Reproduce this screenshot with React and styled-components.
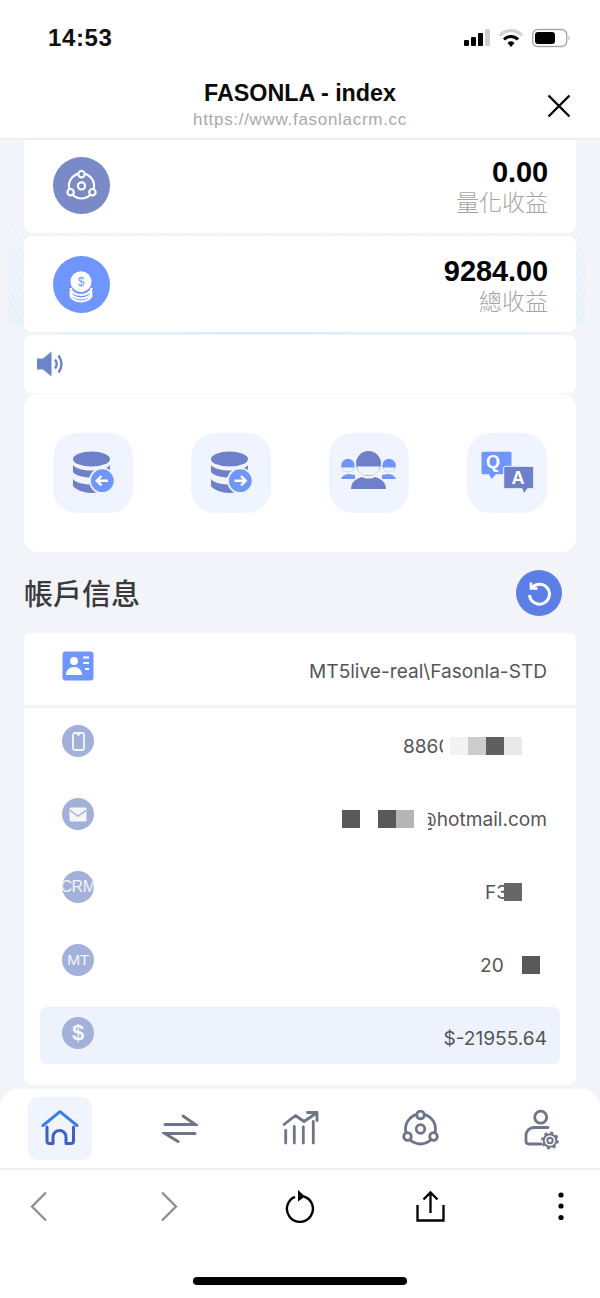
import React from "react";
import styled, { createGlobalStyle } from "styled-components";

const GlobalStyle = createGlobalStyle`
  html, body {
    margin: 0;
    padding: 0;
    background: #fff;
  }
  * {
    box-sizing: border-box;
  }
`;

const UI_FONT = `Inter, "Noto Sans", "Noto Sans CJK TC", sans-serif`;
const CJK_FONT = `"Noto Sans CJK TC", "Noto Sans", sans-serif`;

const Page = styled.div`
  width: 600px;
  height: 1298px;
  display: flex;
  flex-direction: column;
  overflow: hidden;
  font-family: ${UI_FONT};
  background: #f2f4f9;
`;

const StatusBar = styled.div`
  height: 70px;
  padding: 24px 29px 0 48px;
  display: flex;
  justify-content: space-between;
  align-items: flex-start;
  background: #fff;
`;

const Clock = styled.div`
  font: 600 24px/28px "Liberation Sans", sans-serif;
  letter-spacing: 0.6px;
  color: #111;
`;

const StatusIcons = styled.svg`
  margin-top: 3px;
`;

const NavBar = styled.div`
  height: 70px;
  position: relative;
  display: flex;
  flex-direction: column;
  align-items: center;
  background: #fff;
  border-bottom: 2px solid #eceef2;
`;

const NavTitle = styled.div`
  margin-top: 9px;
  font: 700 23.3px/28px "Liberation Sans", sans-serif;
  color: #0a0a0a;
`;

const NavUrl = styled.div`
  margin-top: 2px;
  font: 400 17px/22px "Liberation Sans", sans-serif;
  letter-spacing: 0.7px;
  color: #a9a9a9;
`;

const CloseButton = styled.div`
  position: absolute;
  right: 29px;
  top: 24px;
  width: 24px;
  height: 24px;
`;

const Hero = styled.div`
  position: relative;
  padding: 0 24px;
  display: flex;
  flex-direction: column;
  gap: 3px;

  &::before {
    content: "";
    position: absolute;
    left: 8px;
    right: 15px;
    top: 50px;
    height: 135px;
    background:
      repeating-linear-gradient(60deg, rgba(255, 255, 255, 0.3) 0 2px, transparent 2px 5px),
      linear-gradient(180deg, #f2f4f9 0%, #ecf2f9 55%, #e5f0f9 100%);
  }

  &::after {
    content: "";
    position: absolute;
    left: 60px;
    right: 40px;
    top: 191px;
    height: 3px;
    background: linear-gradient(90deg, #e6eff8, #dcebf6 40%, #e9f0f8);
  }
`;

const StatCard = styled.div`
  position: relative;
  z-index: 1;
  height: ${(p) => p.$height}px;
  padding: 0 28px ${(p) => (p.$flush ? 3 : 0)}px 29px;
  display: flex;
  align-items: center;
  justify-content: space-between;
  background: #fff;
  border-radius: 0 0 8px 8px;
  border-top-left-radius: ${(p) => (p.$flush ? 0 : 8)}px;
  border-top-right-radius: ${(p) => (p.$flush ? 0 : 8)}px;
`;

const StatBadge = styled.div`
  width: 57px;
  height: 57px;
  border-radius: 50%;
  background: ${(p) => p.$color};
  display: flex;
  align-items: center;
  justify-content: center;
`;

const StatText = styled.div`
  padding-top: 2px;
  display: flex;
  flex-direction: column;
  align-items: flex-end;
`;

const StatValue = styled.div`
  font: 700 29px/30px "Liberation Sans", sans-serif;
  letter-spacing: -0.1px;
  color: #050505;
`;

const StatLabel = styled.div`
  font: 300 23px/28px ${CJK_FONT};
  color: #a4a4a4;
`;

const Notice = styled.div`
  position: relative;
  z-index: 1;
  height: 58px;
  padding: 0 12px;
  display: flex;
  align-items: center;
  background: #fff;
  border-radius: 8px;
`;

const Content = styled.div`
  padding: 1px 24px 0;
  display: flex;
  flex-direction: column;
`;

const ActionCard = styled.div`
  height: 158px;
  padding: 39px 29px 0;
  display: flex;
  justify-content: space-between;
  align-items: flex-start;
  background: #fff;
  border-radius: 14px;
`;

const ActionTile = styled.div`
  width: 80px;
  height: 80px;
  border-radius: 24px;
  background: #eff4fe;
`;

const SectionHead = styled.div`
  height: 81px;
  padding: 0 14px 0 0;
  display: flex;
  align-items: center;
  justify-content: space-between;
`;

const SectionTitle = styled.h2`
  margin: 0 0 1px;
  font: 500 29px/40px ${CJK_FONT};
  color: #3a3a3a;
`;

const RefreshButton = styled.div`
  width: 46px;
  height: 46px;
  border-radius: 50%;
  background: #5b7fe6;
  display: flex;
  align-items: center;
  justify-content: center;
`;

const InfoCard = styled.div`
  height: 452px;
  background: #fff;
  border-radius: 8px;
  display: flex;
  flex-direction: column;
`;

const AccountRow = styled.div`
  height: 75px;
  padding: 18px 29px 0 38px;
  display: flex;
  justify-content: space-between;
  align-items: flex-start;
  border-bottom: 3px solid #f2f4f9;
`;

const InfoList = styled.div`
  padding: 7px 16px 0;
  display: flex;
  flex-direction: column;
  gap: 16px;
`;

const InfoRow = styled.div`
  height: 57px;
  padding: 10px ${(p) => p.$inset}px 0 22px;
  display: flex;
  justify-content: space-between;
  align-items: flex-start;
  border-radius: 6px;
  background: ${(p) => (p.$active ? "#edf2fd" : "transparent")};
`;

const RoundIcon = styled.div`
  width: 32px;
  height: 32px;
  flex: none;
  border-radius: 50%;
  background: #a2b0da;
  color: #f4f6fc;
  display: flex;
  align-items: center;
  justify-content: center;
  overflow: hidden;
  white-space: nowrap;
  font: ${(p) => p.$weight || 400} ${(p) => p.$size || 15.5}px/32px "Liberation Sans", sans-serif;
  letter-spacing: -0.4px;
`;

const Value = styled.div`
  display: flex;
  align-items: center;
  height: 30px;
  margin-top: ${(p) => p.$top ?? 6}px;
  font: 400 19.1px/30px ${UI_FONT};
  color: #555;
`;

const ClippedText = styled.span`
  display: flex;
  justify-content: ${(p) => (p.$fromEnd ? "flex-end" : "flex-start")};
  width: ${(p) => p.$width}px;
  margin-left: ${(p) => p.$gap || 0}px;
  overflow: hidden;
  white-space: nowrap;
`;

const Mosaic = styled.div`
  display: flex;
  margin-left: ${(p) => p.$gap}px;
`;

const MosaicCell = styled.div`
  width: 18px;
  height: 18px;
  background: ${(p) => p.$tone};
`;

const Spacer = styled.div`
  flex: 1;
`;

const TabBar = styled.div`
  height: 81px;
  padding-top: 8px;
  display: grid;
  grid-template-columns: repeat(5, 1fr);
  align-items: start;
  justify-items: center;
  background: #fff;
  border-radius: 18px 18px 0 0;
  border-bottom: 2px solid #eceef0;
`;

const TabItem = styled.div`
  width: 64px;
  height: 63px;
  border-radius: 10px;
  background: ${(p) => (p.$active ? "#f0f4fc" : "transparent")};
  display: flex;
  align-items: center;
  justify-content: center;
`;

const BrowserBar = styled.div`
  height: 128px;
  padding: 19px 24px 0 23px;
  display: flex;
  flex-direction: column;
  background: #fff;
`;

const BrowserButtons = styled.div`
  display: flex;
  justify-content: space-between;
  align-items: center;
  height: 34px;
`;

const BrowserButton = styled.div`
  width: 30px;
  height: 34px;
`;

const HomeIndicator = styled.div`
  width: 214px;
  height: 8px;
  margin: 54px auto 0;
  position: relative;
  left: 0.5px;
  border-radius: 4px;
  background: #000;
`;

const NetworkGlyph = ({ color, bg, width = 2, size = 37 }) => (
  <svg width={size} height={size} viewBox="0 0 37 37" fill={bg} stroke={color} strokeWidth={width}>
    <circle cx="18.500" cy="19" r="15" fill="none" />
    <circle cx="18.500" cy="5" r="3.800" />
    <circle cx="5.500" cy="26.500" r="3.800" />
    <circle cx="31.500" cy="26.500" r="3.800" />
    <circle cx="18.500" cy="19" r="4.300" />
  </svg>
);

const CoinsGlyph = () => (
  <svg width="57" height="57" viewBox="0 0 57 57" fill="none">
    <path d="M17.500 32a10.500 7 0 0 0 21 0M17.500 35.500a10.500 7 0 0 0 21 0M17.500 38.500a10.500 7 0 0 0 21 0" stroke="#fff" strokeWidth="2.200" />
    <circle cx="28" cy="25.700" r="10.500" fill="#fff" />
    <text x="28" y="30" textAnchor="middle" fontSize="12" fontFamily="Liberation Sans, sans-serif" fill="#6f96ff">$</text>
  </svg>
);

const Speaker = () => (
  <svg width="30" height="26" viewBox="0 0 30 26">
    <path d="M1 7.500h6L15.500 0.500V25.500L7 18.500H1z" fill="#6b85c9" />
    <path d="M19 8.500q3.500 4.500 0 9M22.500 4.500q6 8.500 0 17" fill="none" stroke="#6b85c9" strokeWidth="2.400" />
  </svg>
);

const Database = ({ dir }) => (
  <svg width="80" height="80" viewBox="0 0 80 80">
    <ellipse cx="38.500" cy="26" rx="18.500" ry="7.500" fill="#6e80c9" />
    <path d="M20 32c3 4 11 5.500 18.500 5.500S54 36 57 32v7c-3 4-11 5.500-18.500 5.500S23 43 20 39z" fill="#6e80c9" />
    <path d="M20 46c3 4 11 5.500 18.500 5.500S54 50 57 46v7c-3 4-11 7-18.500 7S23 57 20 53z" fill="#6e80c9" />
    <circle cx="49.300" cy="47.700" r="12.300" fill="#6f96ff" stroke="#eff4fe" strokeWidth="1.800" />
    {dir === "left" ? (
      <path d="M55 47.700H44M48.500 43l-4.700 4.700 4.700 4.700" fill="none" stroke="#fff" strokeWidth="2.400" />
    ) : (
      <path d="M43.500 47.700H54.500M50 43l4.700 4.700-4.700 4.700" fill="none" stroke="#fff" strokeWidth="2.400" />
    )}
  </svg>
);

const People = () => (
  <svg width="80" height="80" viewBox="0 0 80 80">
    <circle cx="19" cy="32.500" r="6.800" fill="#6f96ff" />
    <circle cx="60" cy="32.500" r="6.800" fill="#6f96ff" />
    <path d="M13 34.500h12c-.5 3-3 4.500-6 4.500s-5.500-1.500-6-4.500zM54 34.500h12c-.5 3-3 4.500-6 4.500s-5.500-1.500-6-4.500z" fill="#eff4fe" />
    <path d="M12 46q1-4 7-5l7 1v4zM67 46q-1-4-7-5l-7 1v4z" fill="#6f96ff" />
    <circle cx="39.500" cy="30.500" r="14" fill="#eff4fe" />
    <circle cx="39.500" cy="30.500" r="12.500" fill="#6e80c9" />
    <path d="M28 33.500h23c-1 6-5.500 9-11.500 9S29 39.500 28 33.500z" fill="#eff4fe" />
    <path d="M22 56c0-6 4-10 11-12 2 1 4 1.500 6.500 1.500s4.500-.5 6.500-1.500c7 2 11 6 11 12z" fill="#6e80c9" />
  </svg>
);

const QandA = () => (
  <svg width="80" height="80" viewBox="0 0 80 80" fontFamily="Liberation Sans, sans-serif" fontWeight="700" textAnchor="middle">
    <path d="M16 18.700h27a1.500 1.500 0 0 1 1.500 1.500v19.600a1.500 1.500 0 0 1-1.500 1.500H29l-4.500 4.700-2.500-4.700h-6a1.500 1.500 0 0 1-1.500-1.500V20.200a1.500 1.500 0 0 1 1.500-1.500z" fill="#6f96ff" />
    <text x="26" y="35" fontSize="18" fill="#fff">Q</text>
    <path d="M38.200 33.300h27a1.500 1.500 0 0 1 1.500 1.500v19.400a1.500 1.500 0 0 1-1.500 1.500H60.500L57 61l-2-5.300H38.200a1.500 1.500 0 0 1-1.500-1.500V34.800a1.500 1.500 0 0 1 1.500-1.500z" fill="#6e80c9" stroke="#eff4fe" strokeWidth="1" />
    <text x="51" y="51" fontSize="18" fill="#fff">A</text>
  </svg>
);

const ContactCard = () => (
  <svg width="32" height="30" viewBox="0 0 32 30">
    <rect x="0.500" y="0.500" width="31" height="29" rx="3" fill="#6f96ff" />
    <circle cx="12" cy="10" r="4" fill="#fff" />
    <path d="M4 24c0-5 3.500-8 8-8s8 3 8 8z" fill="#fff" />
    <path d="M21 6.500h6M21 12h6M23 18h4" stroke="#fff" strokeWidth="2" />
  </svg>
);

const PhoneGlyph = () => (
  <svg width="13" height="19" viewBox="0 0 13 19" fill="none" stroke="#f4f6fc" strokeWidth="1.800">
    <rect x="1" y="1" width="11" height="17" rx="2" />
    <path d="M5 2.500h3" />
  </svg>
);

const MailGlyph = () => (
  <svg width="18" height="15" viewBox="0 0 18 15">
    <rect x="0.500" y="0.500" width="17" height="14" rx="1.500" fill="#f4f6fc" />
    <path d="M0.500 3l8.500 6 8.500-6" fill="none" stroke="#a2b0da" strokeWidth="1.500" />
  </svg>
);

const HomeIcon = () => (
  <svg width="40" height="38" viewBox="0 0 40 38" fill="none" strokeWidth="3" strokeLinecap="round" strokeLinejoin="round">
    <path d="M7 17V31q0 2.500 2.500 2.500H13V27a6.500 6.500 0 0 1 13 0v6.500h5q2.500 0 2.500-2.500V17" stroke="#3e5fc6" />
    <path d="M3 15.500L20 1.700l17 13.800" stroke="#3b7df0" />
  </svg>
);

const SwapIcon = () => (
  <svg width="36" height="32" viewBox="0 0 36 32" fill="none" stroke="#6f7488" strokeWidth="3" strokeLinecap="round">
    <path d="M3 11.500h30.500L21 3M33 20.500H3l13 8" />
  </svg>
);

const ChartIcon = () => (
  <svg width="38" height="38" viewBox="0 0 38 38" fill="none" stroke="#6f7488" strokeWidth="2.800" strokeLinecap="round" strokeLinejoin="round">
    <path d="M4.700 33V20.500M13.300 33V16.500M22.300 33V17M32.300 33V11.500" />
    <path d="M3 14.500L14.500 5.500l8.500 6L35.500 3M26.500 2.500h9.500v8" />
  </svg>
);

const UserGearIcon = () => (
  <svg width="40" height="42" viewBox="0 0 40 42" fill="none" stroke="#6f7488" strokeWidth="2.800" strokeLinecap="round">
    <circle cx="20.700" cy="9.200" r="6" />
    <path d="M28 19.500H14a8 8 0 0 0-8 8V33q0 3 3 3H21" />
    <circle cx="30" cy="32.500" r="2.700" strokeWidth="2" />
    <circle cx="30" cy="32.500" r="6.300" strokeWidth="2" />
    <circle cx="30" cy="32.500" r="7.800" strokeWidth="2.200" strokeDasharray="3 3.130" strokeLinecap="butt" />
  </svg>
);

const Chevron = ({ dir }) => (
  <svg width="30" height="34" viewBox="0 0 30 34" fill="none" stroke="#8f8f8f" strokeWidth="2.300">
    <path d={dir === "left" ? "M23 3.500L9 17.500l14 14" : "M8 3.500l14 14-14 14"} />
  </svg>
);

const ReloadIcon = () => (
  <svg width="30" height="34" viewBox="0 0 30 34" fill="none" stroke="#000" strokeWidth="2.400">
    <path d="M10 7.800A13 13 0 1 0 19 7.500" />
    <path d="M13 1l7 6.500-7 5z" fill="#000" stroke="none" />
  </svg>
);

const ShareIcon = () => (
  <svg width="30" height="34" viewBox="0 0 30 34" fill="none" stroke="#000" strokeWidth="2.300">
    <path d="M15.500 24V4M8.500 10.500l7-7 7 7M2.500 16v15.500h26V16" />
  </svg>
);

const DotsIcon = () => (
  <svg width="30" height="34" viewBox="0 0 30 34" fill="#000">
    <circle cx="15" cy="6" r="2.600" />
    <circle cx="15" cy="17" r="2.600" />
    <circle cx="15" cy="28.500" r="2.600" />
  </svg>
);

const SystemIcons = () => (
  <StatusIcons width="108" height="22" viewBox="0 0 108 22">
    <rect x="1" y="13" width="5" height="6" rx="1" fill="#000" />
    <rect x="8" y="10" width="5" height="9" rx="1" fill="#000" />
    <rect x="15" y="6" width="5" height="13" rx="1" fill="#000" />
    <rect x="22" y="2" width="5" height="17" rx="1" fill="#cfcfcf" />
    <path d="M37 8.500a15 15 0 0 1 22 0" fill="none" stroke="#d2d2d2" strokeWidth="3.200" />
    <path d="M41 12.500a9.500 9.500 0 0 1 14 0" fill="none" stroke="#000" strokeWidth="3" />
    <path d="M44.500 16a4.500 4.500 0 0 1 7 0L48 20z" fill="#000" />
    <rect x="69.700" y="2.500" width="34" height="17" rx="5" fill="none" stroke="#a8a8a8" strokeWidth="1.400" />
    <rect x="72" y="5" width="20" height="12" rx="3" fill="#000" />
    <path d="M105.500 8.500q2 2.500 0 5z" fill="#a8a8a8" />
  </StatusIcons>
);

const actions = [
  <Database dir="left" key="in" />,
  <Database dir="right" key="out" />,
  <People key="people" />,
  <QandA key="qa" />,
];

const tabs = [
  { id: "home", icon: <HomeIcon />, active: true },
  { id: "swap", icon: <SwapIcon /> },
  { id: "chart", icon: <ChartIcon /> },
  { id: "network", icon: <NetworkGlyph color="#6f7488" bg="#fff" width={2.8} /> },
  { id: "user", icon: <UserGearIcon /> },
];

export default function App() {
  return (
    <Page>
      <GlobalStyle />
      <StatusBar>
        <Clock>14:53</Clock>
        <SystemIcons />
      </StatusBar>
      <NavBar>
        <NavTitle>FASONLA - index</NavTitle>
        <NavUrl>https://www.fasonlacrm.cc</NavUrl>
        <CloseButton>
          <svg width="24" height="24" viewBox="0 0 24 24" stroke="#000" strokeWidth="2.300">
            <path d="M1.500 1.500l21 21M22.500 1.500l-21 21" />
          </svg>
        </CloseButton>
      </NavBar>

      <Hero>
        <StatCard $height={93} $flush>
          <StatBadge $color="#7a8ac6">
            <NetworkGlyph color="#fff" bg="#7a8ac6" width={2.6} size={31} />
          </StatBadge>
          <StatText>
            <StatValue>0.00</StatValue>
            <StatLabel>量化收益</StatLabel>
          </StatText>
        </StatCard>
        <StatCard $height={96}>
          <StatBadge $color="#6f96ff">
            <CoinsGlyph />
          </StatBadge>
          <StatText>
            <StatValue>9284.00</StatValue>
            <StatLabel>總收益</StatLabel>
          </StatText>
        </StatCard>
        <Notice>
          <Speaker />
        </Notice>
      </Hero>

      <Content>
        <ActionCard>
          {actions.map((icon) => (
            <ActionTile key={icon.key}>{icon}</ActionTile>
          ))}
        </ActionCard>

        <SectionHead>
          <SectionTitle>帳戶信息</SectionTitle>
          <RefreshButton>
            <svg width="28" height="28" viewBox="0 0 28 28" fill="none" stroke="#fff" strokeWidth="3">
              <path d="M7 8.500A10 10 0 1 1 4.500 16" />
              <path d="M6 3.500v6h6.500" strokeWidth="2.600" />
            </svg>
          </RefreshButton>
        </SectionHead>

        <InfoCard>
          <AccountRow>
            <ContactCard />
            <Value $top={5}>MT5live-real\Fasonla-STD</Value>
          </AccountRow>
          <InfoList>
            <InfoRow $inset={38}>
              <RoundIcon><PhoneGlyph /></RoundIcon>
              <Value>
                <ClippedText $width={40}>8860</ClippedText>
                <Mosaic $gap={7}>
                  {["#f3f3f3", "#cccccc", "#5f5f5f", "#e9e9e9"].map((tone, i) => (
                    <MosaicCell key={i} $tone={tone} />
                  ))}
                </Mosaic>
              </Value>
            </InfoRow>
            <InfoRow $inset={13}>
              <RoundIcon><MailGlyph /></RoundIcon>
              <Value>
                <Mosaic $gap={0}>
                  {["#595959", "#ffffff", "#595959", "#b5b5b5"].map((tone, i) => (
                    <MosaicCell key={i} $tone={tone} />
                  ))}
                </Mosaic>
                <ClippedText $width={119} $gap={14} $fromEnd>
                  @hotmail.com
                </ClippedText>
              </Value>
            </InfoRow>
            <InfoRow $inset={38}>
              <RoundIcon $size={16}>CRM</RoundIcon>
              <Value>
                <ClippedText $width={19}>F3</ClippedText>
                <Mosaic $gap={0}>
                  <MosaicCell $tone="#666666" />
                </Mosaic>
              </Value>
            </InfoRow>
            <InfoRow $inset={20}>
              <RoundIcon>MT</RoundIcon>
              <Value>
                <ClippedText $width={24}>20</ClippedText>
                <Mosaic $gap={18}>
                  <MosaicCell $tone="#595959" />
                </Mosaic>
              </Value>
            </InfoRow>
            <InfoRow $inset={13} $active>
              <RoundIcon $size={22} $weight={700}>$</RoundIcon>
              <Value>$-21955.64</Value>
            </InfoRow>
          </InfoList>
        </InfoCard>
      </Content>

      <Spacer />

      <TabBar>
        {tabs.map((tab) => (
          <TabItem key={tab.id} $active={tab.active}>
            {tab.icon}
          </TabItem>
        ))}
      </TabBar>
      <BrowserBar>
        <BrowserButtons>
          <BrowserButton><Chevron dir="left" /></BrowserButton>
          <BrowserButton><Chevron dir="right" /></BrowserButton>
          <BrowserButton><ReloadIcon /></BrowserButton>
          <BrowserButton><ShareIcon /></BrowserButton>
          <BrowserButton><DotsIcon /></BrowserButton>
        </BrowserButtons>
        <HomeIndicator />
      </BrowserBar>
    </Page>
  );
}
